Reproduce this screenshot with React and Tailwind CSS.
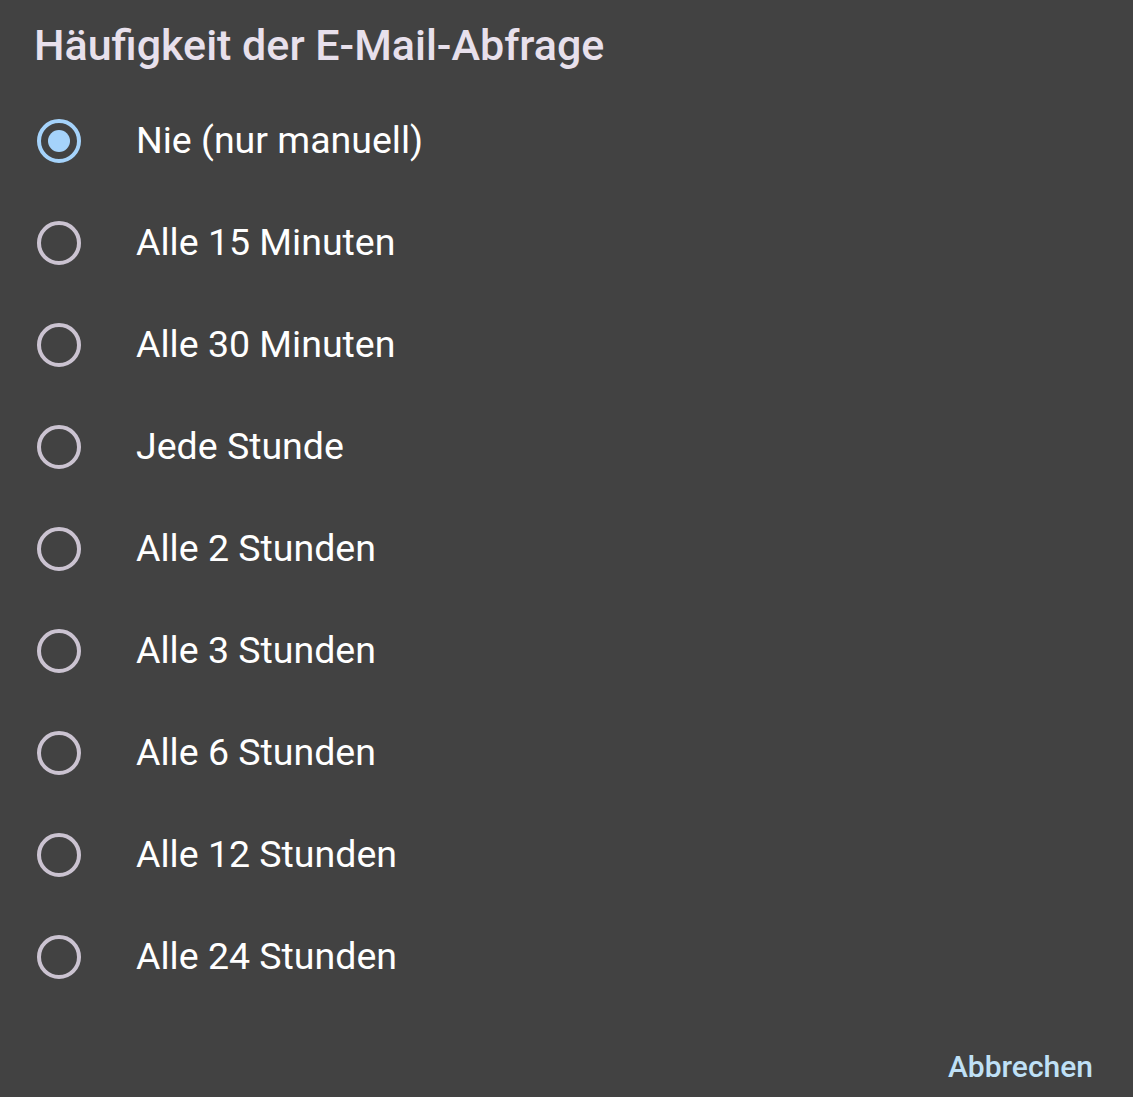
import React, { useState } from 'react';

const options = [
  'Nie (nur manuell)',
  'Alle 15 Minuten',
  'Alle 30 Minuten',
  'Jede Stunde',
  'Alle 2 Stunden',
  'Alle 3 Stunden',
  'Alle 6 Stunden',
  'Alle 12 Stunden',
  'Alle 24 Stunden',
];

const Radio = ({ checked }) => (
  <span
    className={`flex h-[44px] w-[44px] shrink-0 items-center justify-center rounded-full border-[4px] ${
      checked ? 'border-[#a5d3fb]' : 'border-[#cbc3d1]'
    }`}
  >
    {checked && <span className="h-[22px] w-[22px] rounded-full bg-[#a5d3fb]" />}
  </span>
);

const App = () => {
  const [selected, setSelected] = useState(0);

  return (
    <div className="min-h-[1097px] w-full bg-[#424242] font-['Roboto',sans-serif]">
      <div className="flex h-[90px] items-center pl-[34px]">
        <h2 className="text-[43px] font-medium leading-none text-[#e8e0ec]">Häufigkeit der E-Mail-Abfrage</h2>
      </div>

      <div className="flex flex-col">
        {options.map((o, i) => (
          <button
            key={o}
            onClick={() => setSelected(i)}
            className="flex h-[102px] items-center pl-[37px] text-left"
          >
            <Radio checked={selected === i} />
            <span className="ml-[55px] text-[37.5px] leading-none text-white">{o}</span>
          </button>
        ))}
      </div>

      <div className="flex justify-end pr-[40px] pt-[44px]">
        <button className="text-[30px] font-medium leading-none text-[#bfe0f6]">Abbrechen</button>
      </div>
    </div>
  );
};

export default App;
